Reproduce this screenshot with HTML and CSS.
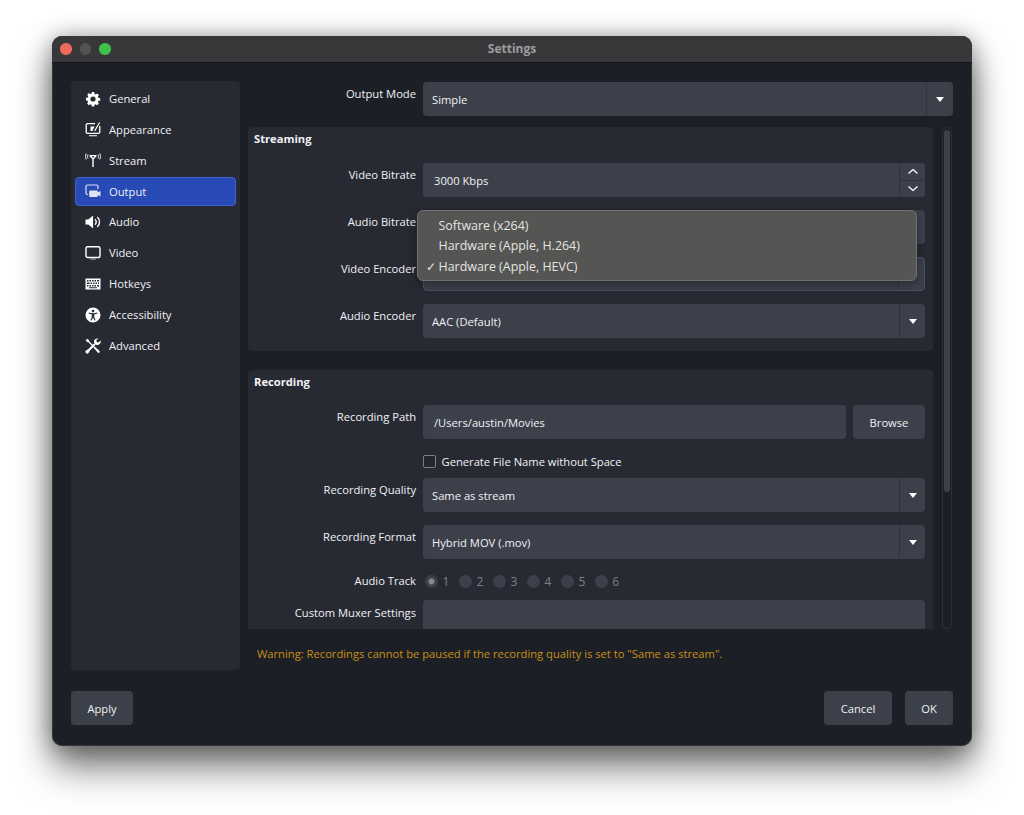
FILE: index.html
```html
<!DOCTYPE html>
<html lang="en">
<head>
<meta charset="utf-8">
<title>Settings</title>
<link rel="stylesheet" href="styles.css">
</head>
<body>
<div class="window">
  <header class="titlebar">
    <div class="lights"><i class="light red"></i><i class="light gray"></i><i class="light green"></i></div>
    <div class="title">Settings</div>
  </header>
  <div class="content">
    <div class="main">
      <nav class="sidebar">
        <div class="nav"><svg class="ico" viewBox="-1.200 -1.200 18.400 18.400"><path fill="#fff" fill-rule="evenodd" d="M6.600 0h2.800l.4 2.200 1.200.6 1.800-1.200 2 2-1.200 1.800.5 1.200 2.200.4v2.800l-2.200.4-.5 1.200 1.200 1.800-2 2-1.800-1.200-1.200.5-.4 2.200H6.600l-.4-2.200-1.200-.5-1.800 1.200-2-2 1.200-1.800-.5-1.200L-.1 9.400V6.600l2.200-.4.500-1.200-1.200-1.800 2-2 1.800 1.200 1.200-.6zM8 5a3 3 0 1 0 0 6 3 3 0 0 0 0-6z"/></svg><span>General</span></div>
        <div class="nav"><svg class="ico" viewBox="0 0 16 16"><path fill="none" stroke="#fff" stroke-width="1.300" d="M10 2.700H2.500a1.300 1.300 0 0 0-1.300 1.300v7a1.300 1.300 0 0 0 1.300 1.300h11a1.300 1.300 0 0 0 1.300-1.300V5"/><path fill="#fff" d="M4 14.200h8v1H4zM5.500 5.500h4.200L7.800 8.700l-.2 1.300H5.500zM9.500 9l4.600-7.800 1 .6L10.500 9.800l-1.300.8z"/></svg><span>Appearance</span></div>
        <div class="nav"><svg class="ico" viewBox="0 0 16 16"><path fill="none" stroke="#fff" stroke-width=".9" d="M3 2.500a3.800 3.800 0 0 0 0 4M1.200 1.500a6 6 0 0 0 0 6M13 2.500a3.800 3.800 0 0 1 0 4M14.800 1.500a6 6 0 0 1 0 6"/><path fill="#fff" d="M4.500 3h7v1.200L8.700 7.200V15H7.300V7.200L4.500 4.200zM6.300 4.200 8 6l1.700-1.800z" fill-rule="evenodd"/></svg><span>Stream</span></div>
        <div class="nav active"><svg class="ico" viewBox="0 0 16 16"><path fill="none" stroke="#dfe4f5" stroke-width="1.200" d="M3 11.500H2.400A1.400 1.400 0 0 1 1 10.100V3.400A1.400 1.400 0 0 1 2.400 2h9.200A1.400 1.400 0 0 1 13 3.400V6"/><path fill="#dfe4f5" d="M5.200 7.500h6.600a1 1 0 0 1 1 1v.8l2.700-1.300v5.400l-2.700-1.300v.8a1 1 0 0 1-1 1H5.200a1 1 0 0 1-1-1V8.500a1 1 0 0 1 1-1z"/></svg><span>Output</span></div>
        <div class="nav"><svg class="ico" viewBox="0 0 16 16"><path fill="#fff" d="M.5 5.500h2.800L8.100 1.500v13L3.300 10.500H.5z"/><path fill="none" stroke="#fff" stroke-width="1.400" d="M10 5.300a3.600 3.600 0 0 1 0 5.400M12.300 3a6.800 6.800 0 0 1 0 10"/></svg><span>Audio</span></div>
        <div class="nav"><svg class="ico" viewBox="0 0 16 16"><rect x="1" y="1.700" width="14" height="10.800" rx="1.800" fill="none" stroke="#fff" stroke-width="1.400"/><path fill="#8b8d92" d="M4.500 13.300h7l-1 1.400h-5z"/></svg><span>Video</span></div>
        <div class="nav"><svg class="ico" viewBox="0 0 16 16"><path fill="#fff" fill-rule="evenodd" d="M.5 2.500h15v11H.5zM2 4v1.500h1.500V4zm2.500 0v1.500H6V4zM7 4v1.500h1.500V4zm2.500 0v1.500H11V4zM12 4v1.500h2V4zM2 6.500V8h2.500V6.500zm3.500 0V8H7V6.500zm2.500 0V8h1.500V6.500zm2.500 0V8H12V6.500zm2.500 0V8h1V6.500zM2 9v1.500h1.500V9zm2.500 0v1.500H6V9zM7 9v1.500h1.500V9zm2.500 0v1.500H11V9zM12 9v1.500h2V9zM4 11.300v1h8v-1z"/></svg><span>Hotkeys</span></div>
        <div class="nav"><svg class="ico" viewBox="0 0 16 16"><path fill="#fff" fill-rule="evenodd" d="M8 .5a7.500 7.500 0 1 1 0 15 7.500 7.500 0 0 1 0-15zM8 2.800a1.300 1.300 0 1 0 0 2.600 1.300 1.300 0 0 0 0-2.600zM3.800 5.500l-.3 1 3.300 1v2.200l-1.300 3.500 1 .4L8 10.500l1.500 3.100 1-.4-1.300-3.500V7.500l3.300-1-.3-1-3.500.8H7.300z"/></svg><span>Accessibility</span></div>
        <div class="nav"><svg class="ico" viewBox="0 0 16 16"><path fill="none" stroke="#fff" stroke-width="1.300" d="M2 2l7 7"/><path fill="#fff" d="M.8 2.200 2.200.8l2 1.400-.4 1.600-1.600.4zM8.400 9.600l1.200-1.200 5 4.600a1.300 1.300 0 0 1-1.700 1.800z"/><path fill="none" stroke="#fff" stroke-width="2" d="M2.200 13.800 10 6"/><path fill="#fff" d="M13.400.6a3.400 3.400 0 0 0-4.200 4.400l1.800 1.800a3.400 3.400 0 0 0 4.500-4.300l-2 2-1.800-.4-.4-1.800zM.9 15a1.800 1.800 0 0 0 2.400.2l1.200-1.700-2-2-1.700 1.200a1.800 1.800 0 0 0 .1 2.300z"/></svg><span>Advanced</span></div>
      </nav>
      <div class="panel">
        <div class="row top-row">
          <label class="lbl">Output Mode</label>
          <div class="combo"><span>Simple</span><b class="arrow-box"><i class="caret"></i></b></div>
        </div>
        <div class="scroll-wrap">
          <div class="scroll">
            <section class="group streaming">
              <h2>Streaming</h2>
              <div class="row">
                <label class="lbl">Video Bitrate</label>
                <div class="combo edit"><span>3000 Kbps</span>
                  <b class="spin"><i class="spin-btn"><svg viewBox="0 0 12 7"><path d="M1.500 5.500 6 1.500l4.500 4" fill="none" stroke="#fff" stroke-width="1.300"/></svg></i><i class="spin-btn"><svg viewBox="0 0 12 7"><path d="M1.500 1.500 6 5.500l4.500-4" fill="none" stroke="#fff" stroke-width="1.300"/></svg></i></b>
                </div>
              </div>
              <div class="row">
                <label class="lbl">Audio Bitrate</label>
                <div class="combo"><span></span><b class="arrow-box"><i class="caret"></i></b></div>
              </div>
              <div class="row">
                <label class="lbl">Video Encoder</label>
                <div class="combo focus"><span></span><b class="arrow-box"><i class="caret"></i></b></div>
              </div>
              <div class="row">
                <label class="lbl">Audio Encoder</label>
                <div class="combo"><span>AAC (Default)</span><b class="arrow-box"><i class="caret"></i></b></div>
              </div>
            </section>
            <section class="group recording">
              <h2>Recording</h2>
              <div class="row path-row">
                <label class="lbl">Recording Path</label>
                <div class="combo edit"><span>/Users/austin/Movies</span></div>
                <div class="btn browse">Browse</div>
              </div>
              <div class="check-row"><i class="check"></i><span>Generate File Name without Space</span></div>
              <div class="row">
                <label class="lbl">Recording Quality</label>
                <div class="combo"><span>Same as stream</span><b class="arrow-box"><i class="caret"></i></b></div>
              </div>
              <div class="row">
                <label class="lbl">Recording Format</label>
                <div class="combo"><span>Hybrid MOV (.mov)</span><b class="arrow-box"><i class="caret"></i></b></div>
              </div>
              <div class="row track-row">
                <label class="lbl">Audio Track</label>
                <div class="tracks">
                  <span class="track on"><i></i>1</span>
                  <span class="track"><i></i>2</span>
                  <span class="track"><i></i>3</span>
                  <span class="track"><i></i>4</span>
                  <span class="track"><i></i>5</span>
                  <span class="track"><i></i>6</span>
                </div>
              </div>
              <div class="row muxer-row">
                <label class="lbl">Custom Muxer Settings</label>
                <div class="combo"><span></span></div>
              </div>
            </section>
          </div>
          <div class="scrollbar"><i class="thumb"></i></div>
        </div>
        <p class="warning">Warning: Recordings cannot be paused if the recording quality is set to "Same as stream".</p>
      </div>
    </div>
    <footer class="footer">
      <div class="btn apply">Apply</div>
      <div class="footer-right">
        <div class="btn cancel">Cancel</div>
        <div class="btn ok">OK</div>
      </div>
    </footer>
  </div>
  <div class="popup">
    <div class="opt">Software (x264)</div>
    <div class="opt">Hardware (Apple, H.264)</div>
    <div class="opt"><em>✓</em>Hardware (Apple, HEVC)</div>
  </div>
</div>
</body>
</html>
```
FILE: styles.css
```css
* { box-sizing: border-box; }
html, body { margin: 0; height: 100%; }
body {
  background: #fff;
  padding: 36px 52px 69px;
  font-family: "Open Sans", "Noto Sans", sans-serif;
  font-size: 11.2px;
  color: #f1f1f3;
  overflow: hidden;
}
.window {
  position: relative;
  width: 920px;
  height: 710px;
  background: #1d1f26;
  border-radius: 10px;
  box-shadow: inset 0 0 0 1px rgba(80,80,84,.5), 0 22px 36px rgba(0,0,0,.5), 0 2px 24px rgba(0,0,0,.38);
  display: flex;
  flex-direction: column;
}
.titlebar {
  height: 27px;
  flex: none;
  background: #38383a;
  border-radius: 10px 10px 0 0;
  border-bottom: 1px solid #15161a;
  display: flex;
  align-items: center;
  justify-content: center;
  position: relative;
}
.title { font-weight: 700; font-size: 12px; line-height: 24px; color: #9d9d9f; }
.lights { position: absolute; left: 8px; top: 7px; display: flex; gap: 8px; }
.light { width: 11.500px; height: 11.500px; border-radius: 50%; display: block; }
.red { background: #ed6a5e; }
.gray { background: #525254; }
.green { background: #3fc24d; }
.content { flex: 1; display: flex; flex-direction: column; padding: 18px 19px 20px; min-height: 0; }
.main { display: flex; gap: 8px; height: 589px; }
.sidebar {
  width: 169px;
  flex: none;
  background: #272a33;
  border-radius: 4px;
  padding: 3px 4px;
}
.nav {
  height: 29px;
  margin-bottom: 1.900px;
  border-radius: 4px;
  display: flex;
  align-items: center;
  padding-left: 8.500px;
  gap: 8.500px;
  border: 1px solid transparent;
}
.nav span { line-height: 1; }
.active { background: #274ab6; border-color: #3f63cf; }
.ico { width: 16px; height: 16px; flex: none; }
.panel { flex: 1; min-width: 0; display: flex; flex-direction: column; }
.row { display: flex; gap: 7px; margin-bottom: 13px; }
.top-row { margin-top: 1px; margin-bottom: 11px; }
.top-row .arrow-box { width: 27px; }
.lbl { width: 168px; flex: none; text-align: right; padding-top: 4px; line-height: 16px; }
.combo {
  flex: 1;
  min-width: 0;
  height: 34px;
  background: #3c404b;
  border-radius: 4px;
  display: flex;
  align-items: center;
  justify-content: space-between;
  padding-left: 9px;
}
.edit { padding-left: 11px; }
.focus { border: 1px solid #4a5063; }
.arrow-box {
  width: 26px;
  height: 100%;
  border-left: 1px solid #31343e;
  display: flex;
  align-items: center;
  justify-content: center;
}
.caret {
  width: 0; height: 0;
  border-left: 4.500px solid transparent;
  border-right: 4.500px solid transparent;
  border-top: 5px solid #fff;
}
.spin {
  width: 26px;
  height: 100%;
  border-left: 1px solid #31343e;
  display: flex;
  flex-direction: column;
}
.spin-btn { flex: 1; display: flex; align-items: center; justify-content: center; }
.spin-btn:first-child { border-bottom: 1px solid #31343e; }
.spin-btn svg { width: 12px; height: 7px; display: block; }
.scroll-wrap { display: flex; height: 502px; gap: 9px; }
.scroll { width: 685px; height: 502px; overflow: hidden; flex: none; }
.group { background: #272a33; border-radius: 4px; padding: 0 8px 0 0; }
.group h2 { margin: 0; font-size: 11.200px; font-weight: 700; padding: 4px 0 0 6px; height: 36px; line-height: 16px; }
.streaming { height: 224px; margin-bottom: 19px; }
.recording { height: 300px; }
.recording h2 { height: 35px; }
.path-row { margin-bottom: 14px; gap: 7px; }
.browse { width: 72px; flex: none; }
.btn {
  height: 34px;
  background: #3c404b;
  border-radius: 4px;
  display: flex;
  align-items: center;
  justify-content: center;
}
.check-row {
  margin-left: 175px;
  display: flex;
  align-items: center;
  gap: 5.500px;
  height: 16px;
  margin-bottom: 9px;
}
.check {
  width: 13px; height: 13px;
  border: 1px solid #7d7f86;
  border-radius: 2px;
  background: #24262e;
  display: block;
}
.track-row { margin-bottom: 8px; margin-top: -2px; height: 22px; }
.track-row .lbl { padding-top: 3px; }
.tracks { display: flex; gap: 9.600px; align-items: center; height: 22px; margin-left: 2px; font-size: 12px; }
.track { display: flex; align-items: center; gap: 4.500px; color: #7e8088; }
.track i { width: 13px; height: 13px; border-radius: 50%; background: #3c404b; display: block; }
.track.on i { background: radial-gradient(circle, #868890 0 2.500px, #3c404b 3.500px); }
.muxer-row .lbl { padding-top: 5px; }
.scrollbar {
  width: 10px;
  height: 502px;
  flex: none;
  border: 1px solid #2b2e37;
  border-radius: 4px;
  padding: 2px 1px;
}
.thumb { display: block; width: 6px; height: 362px; background: #3c404b; border-radius: 3px; }
.warning { margin: 17px 0 0 9px; color: #c78f15; line-height: 16px; }
.footer { display: flex; justify-content: space-between; margin-top: 21px; }
.apply { width: 62px; }
.footer-right { display: flex; gap: 13px; }
.cancel { width: 68px; }
.ok { width: 48px; }
.popup {
  position: absolute;
  left: 365px;
  top: 174px;
  width: 500px;
  height: 71px;
  background: #555554;
  border: 1px solid #71716f;
  border-radius: 6px;
  box-shadow: 0 3px 10px rgba(0,0,0,.35);
  padding: 4.500px 0 0 20.500px;
  color: #e4e4e2;
  font-size: 12.450px;
}
.opt { height: 20.500px; line-height: 20.500px; position: relative; white-space: nowrap; }
.opt em { position: absolute; left: -13px; top: 0; font-style: normal; font-size: 12px; }
```
